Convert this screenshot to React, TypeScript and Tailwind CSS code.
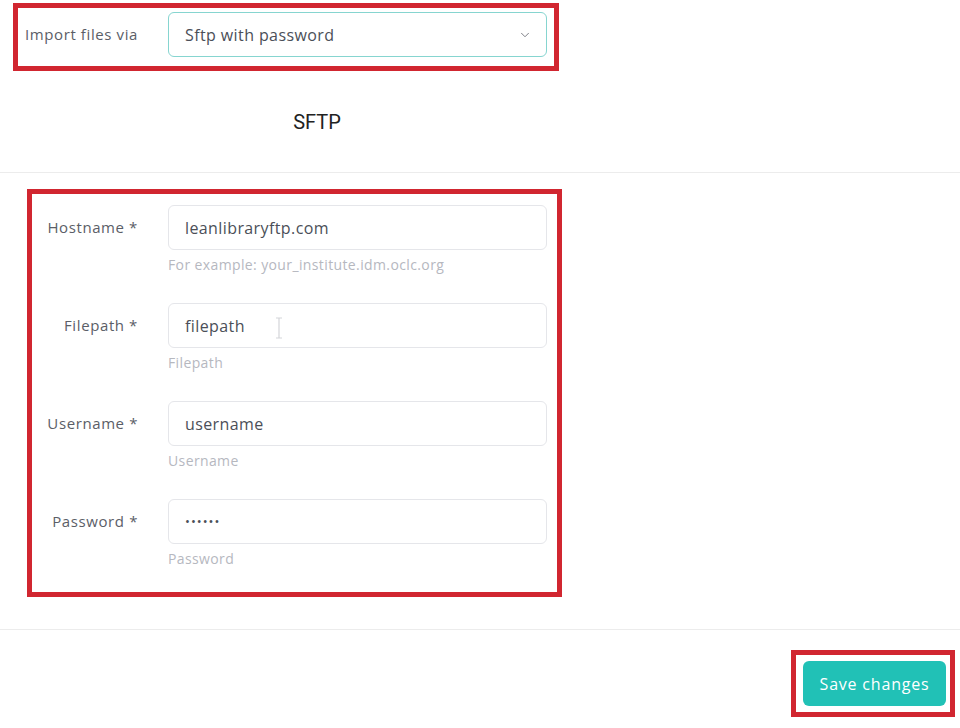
import { ChevronDown } from "lucide-react";

const fields = [
  { label: "Hostname *", value: "leanlibraryftp.com", hint: "For example: your_institute.idm.oclc.org" },
  { label: "Filepath *", value: "filepath", hint: "Filepath", cursor: true },
  { label: "Username *", value: "username", hint: "Username" },
  { label: "Password *", value: "••••••", hint: "Password", secret: true },
];

const font = { fontFamily: "'Open Sans', 'Noto Sans', sans-serif" };

const App = () => {
  return (
    <div className="w-[960px] h-[728px] bg-white overflow-hidden" style={font}>
      <div className="pt-[3px] pl-[13px]">
        <div className="w-[546px] h-[68px] border-[5px] border-[#d12630] flex items-start pt-[4px] pl-[7px]">
          <div className="w-[143px] h-[45px] flex items-center text-[15px] tracking-[0.6px] text-[#5b5e67]">
            Import files via
          </div>
          <div className="w-[379px] h-[45px] rounded-[6px] border border-[#86d5d0] flex items-center justify-between pl-[16px] pr-[14px] text-[16px] tracking-[0.4px] text-[#4b4f58]">
            <span>Sftp with password</span>
            <ChevronDown className="w-[14px] h-[14px] text-[#6b6e76]" strokeWidth={1.5} />
          </div>
        </div>
      </div>

      <div className="w-[634px] h-[101px] flex items-center justify-center text-[20px] text-[#222]" style={{ fontFamily: "Roboto, sans-serif" }}>
        SFTP
      </div>
      <div className="border-t border-[#ececec]" />

      <div className="mt-[16px] ml-[27px] w-[535px] h-[408px] border-[5px] border-[#d12630] pt-[11px] flex flex-col gap-[28px]">
        {fields.map((f) => (
          <div key={f.label} className="flex">
            <div className="w-[136px] h-[45px] pr-[30px] flex items-center justify-end text-[15px] tracking-[0.6px] text-[#5b5e67]">
              {f.label}
            </div>
            <div>
              <div className="relative w-[379px] h-[45px] rounded-[6px] border border-[#e5e6ea] flex items-center pl-[16px] text-[16px] tracking-[0.4px] text-[#4b4f58]">
                <span className={f.secret ? "text-[13px] tracking-[1px]" : ""}>{f.value}</span>
                {f.cursor && (
                  <svg className="absolute left-[105px] top-[13px]" width="10" height="22" viewBox="0 0 10 22" fill="none" stroke="#d4d5d9" strokeWidth="1.2">
                    <path d="M2 1h6M5 1v20M2 21h6" />
                  </svg>
                )}
              </div>
              <div className="mt-[5px] h-[20px] leading-[20px] text-[14px] tracking-[0.38px] text-[#b6b8bf]">{f.hint}</div>
            </div>
          </div>
        ))}
      </div>

      <div className="mt-[32px] border-t border-[#ececec]" />

      <div className="mt-[20px] flex justify-end pr-[5px]">
        <div className="w-[164px] h-[67px] border-[5px] border-[#d12630] pt-[6px] pl-[7px]">
          <button className="w-[143px] h-[45px] rounded-[6px] bg-[#21c1b6] text-white text-[16px] tracking-[0.8px] font-medium">
            Save changes
          </button>
        </div>
      </div>
    </div>
  );
};

export default App;
